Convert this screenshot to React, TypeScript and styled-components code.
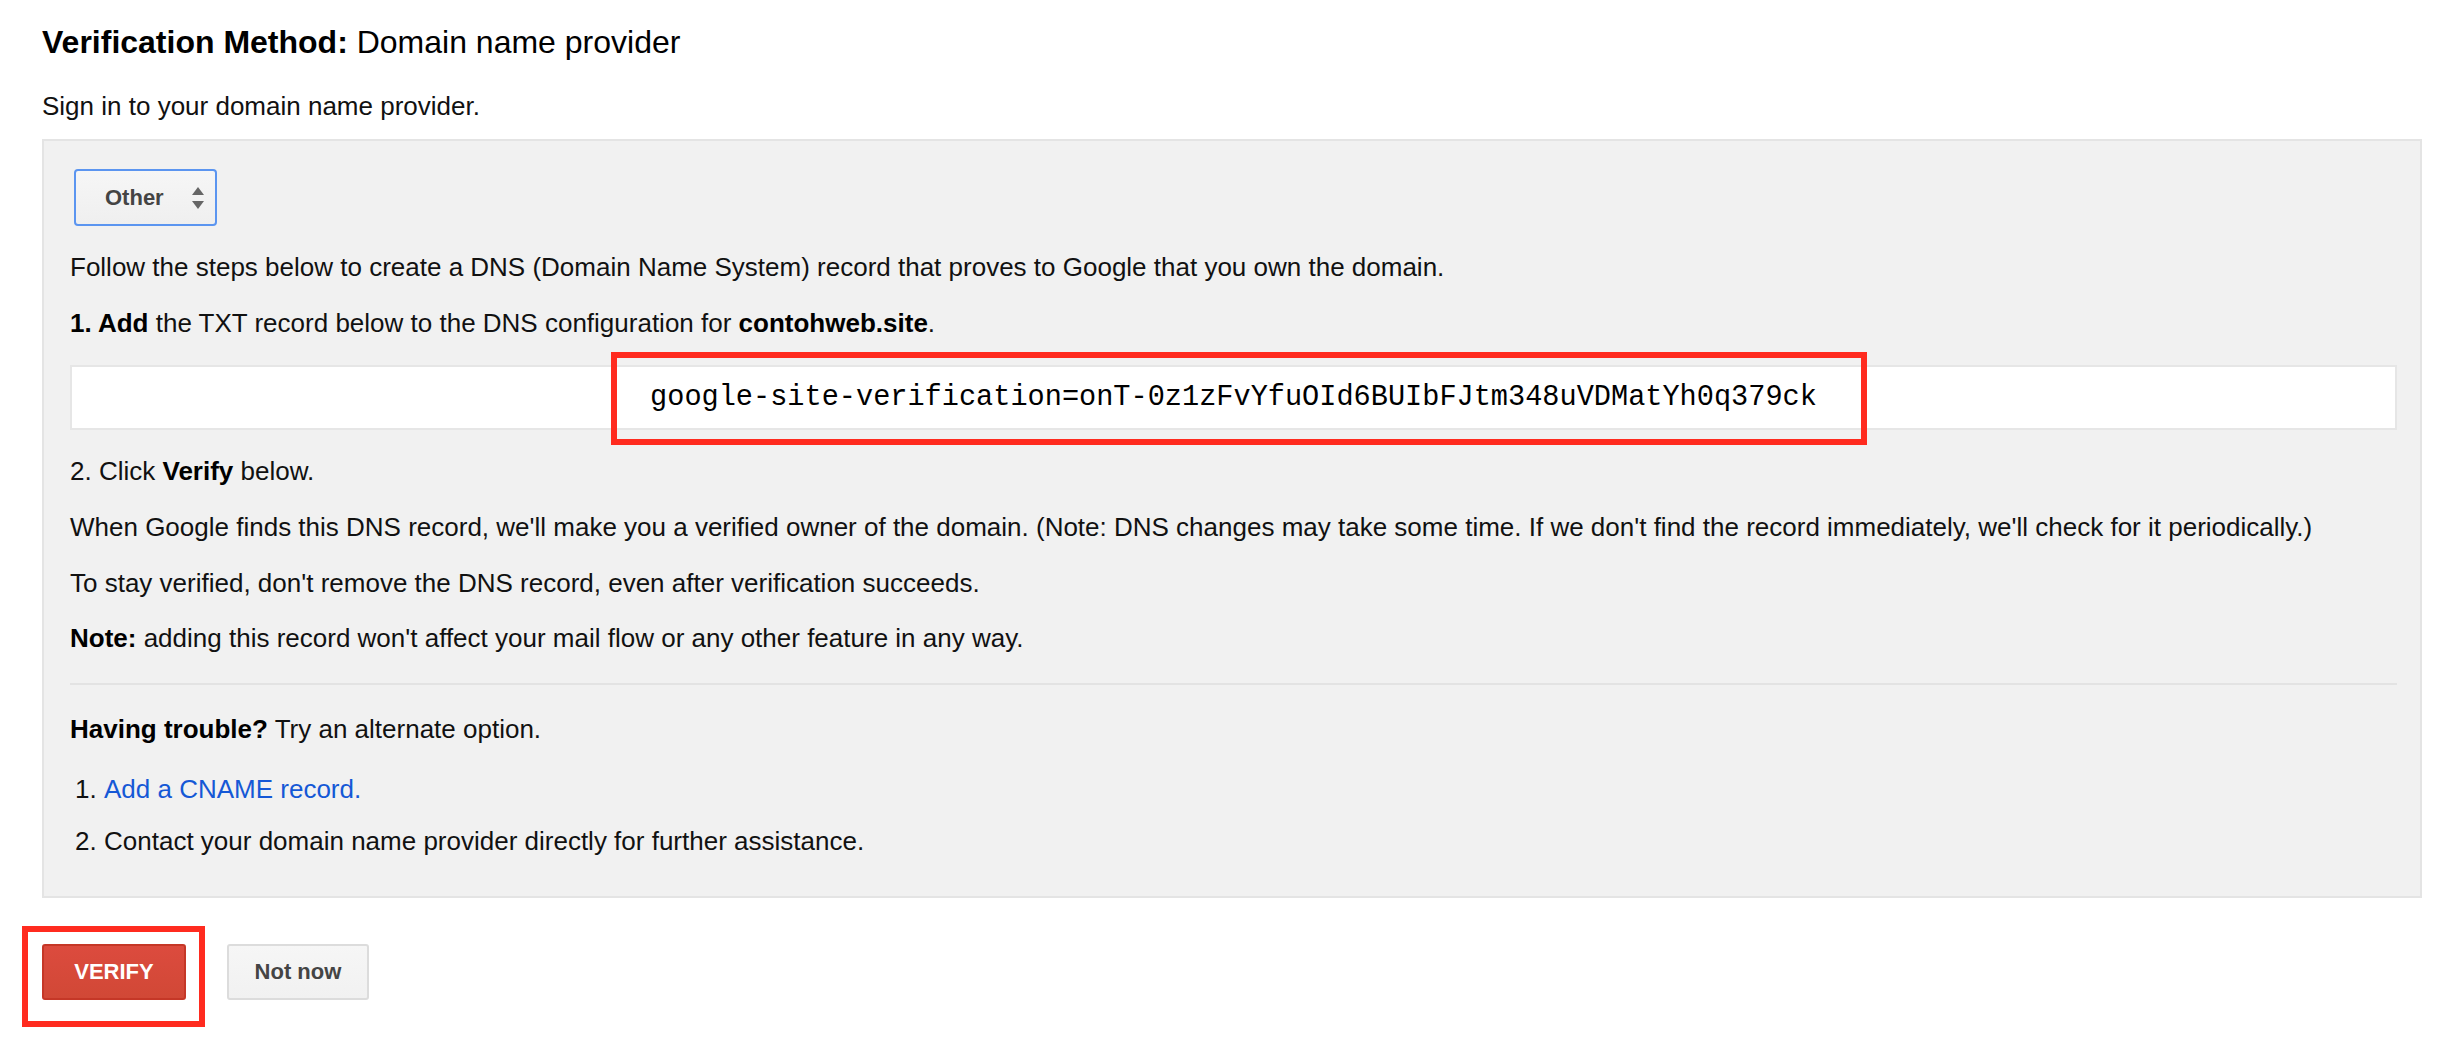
import styled, { createGlobalStyle } from 'styled-components'

const GlobalStyle = createGlobalStyle`
  body {
    margin: 0;
    background: #fff;
    font-family: 'Liberation Sans', Arial, Helvetica, sans-serif;
    color: #111;
  }
`

const Page = styled.div`
  padding: 23px 32px 40px 42px;
`

const Title = styled.h2`
  margin: 0;
  font-size: 32px;
  line-height: 38px;
  font-weight: 400;
  color: #000;

  strong {
    font-weight: 700;
  }
`

const Text = styled.p<{ $gap?: number }>`
  margin: ${(p) => p.$gap ?? 0}px 0 0;
  font-size: 26px;
  line-height: 30px;
  color: #111;

  strong {
    font-weight: 700;
    color: #000;
  }
`

const Panel = styled.section`
  margin-top: 18px;
  background: #f1f1f1;
  border: 2px solid #e4e4e4;
  padding: 28px 23px 40px 26px;
`

const SelectBox = styled.div`
  display: flex;
  align-items: center;
  justify-content: space-between;
  box-sizing: border-box;
  width: 143px;
  height: 57px;
  margin-left: 4px;
  padding: 0 10px 0 29px;
  border: 2px solid #5b95f0;
  border-radius: 4px;
  background: linear-gradient(#f6f6f6, #efefef);
  font-size: 22px;
  font-weight: 700;
  color: #444;
`

const RecordBox = styled.div`
  margin-top: 27px;
  height: 61px;
  display: flex;
  align-items: center;
  justify-content: center;
  background: #fff;
  border: 2px solid #e6e6e6;
`

const Highlight = styled.span<{ $inset: string }>`
  position: relative;
  display: inline-block;

  &::after {
    content: '';
    position: absolute;
    inset: ${(p) => p.$inset};
    border: 6px solid #ff2b1f;
    pointer-events: none;
  }
`

const RecordValue = styled.span`
  font-family: 'Liberation Mono', 'Courier New', monospace;
  font-size: 28.6px;
  line-height: 34px;
  color: #000;
  white-space: nowrap;
`

const Divider = styled.hr`
  margin: 30px 0 0;
  border: 0;
  border-top: 2px solid #e3e3e3;
`

const Steps = styled.ol`
  margin: 30px 0 0;
  padding-left: 34px;
  font-size: 26px;
  line-height: 30px;
  color: #111;

  li + li {
    margin-top: 22px;
  }
`

const Link = styled.a`
  color: #1558d6;
  text-decoration: none;
`

const Actions = styled.div`
  display: flex;
  gap: 41px;
  margin-top: 46px;
`

const Button = styled.button<{ $primary?: boolean }>`
  box-sizing: border-box;
  height: 56px;
  width: ${(p) => (p.$primary ? 144 : 142)}px;
  border-radius: 3px;
  font-family: 'Liberation Sans', Arial, sans-serif;
  font-size: 22px;
  font-weight: 700;
  cursor: pointer;
  border: 2px solid ${(p) => (p.$primary ? '#c53727' : '#dcdcdc')};
  background: ${(p) =>
    p.$primary ? 'linear-gradient(#dc4b3e, #d14836)' : 'linear-gradient(#f6f6f6, #f1f1f1)'};
  color: ${(p) => (p.$primary ? '#fff' : '#444')};
`

function SelectArrows() {
  return (
    <svg width="14" height="24" viewBox="0 0 14 24">
      <path d="M7 1 L13 9 H1 Z" fill="#666" />
      <path d="M7 23 L13 15 H1 Z" fill="#666" />
    </svg>
  )
}

export default function App() {
  return (
    <>
      <GlobalStyle />
      <Page>
        <Title>
          <strong>Verification Method:</strong> Domain name provider
        </Title>
        <Text $gap={30}>Sign in to your domain name provider.</Text>

        <Panel>
          <SelectBox>
            <span>Other</span>
            <SelectArrows />
          </SelectBox>

          <Text $gap={26}>
            Follow the steps below to create a DNS (Domain Name System) record that proves to Google that you own the
            domain.
          </Text>
          <Text $gap={26}>
            <strong>1. Add</strong> the TXT record below to the DNS configuration for <strong>contohweb.site</strong>.
          </Text>

          <RecordBox>
            <Highlight $inset="-29px -50px -30px -39px">
              <RecordValue>google-site-verification=onT-0z1zFvYfuOId6BUIbFJtm348uVDMatYh0q379ck</RecordValue>
            </Highlight>
          </RecordBox>

          <Text $gap={26}>
            2. Click <strong>Verify</strong> below.
          </Text>
          <Text $gap={26}>
            When Google finds this DNS record, we'll make you a verified owner of the domain. (Note: DNS changes may take
            some time. If we don't find the record immediately, we'll check for it periodically.)
          </Text>
          <Text $gap={26}>To stay verified, don't remove the DNS record, even after verification succeeds.</Text>
          <Text $gap={25}>
            <strong>Note:</strong> adding this record won't affect your mail flow or any other feature in any way.
          </Text>

          <Divider />

          <Text $gap={29}>
            <strong>Having trouble?</strong> Try an alternate option.
          </Text>
          <Steps>
            <li>
              <Link href="#">Add a CNAME record.</Link>
            </li>
            <li>Contact your domain name provider directly for further assistance.</li>
          </Steps>
        </Panel>

        <Actions>
          <Highlight $inset="-18px -19px -27px -20px">
            <Button $primary>VERIFY</Button>
          </Highlight>
          <Button>Not now</Button>
        </Actions>
      </Page>
    </>
  )
}
